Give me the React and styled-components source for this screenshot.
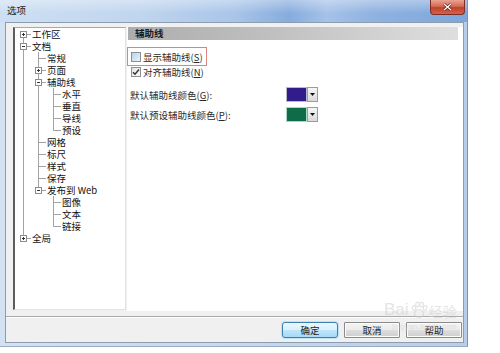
import React from 'react';
import styled, { createGlobalStyle } from 'styled-components';

const GlobalStyle = createGlobalStyle`
  html, body { margin: 0; padding: 0; background: #fff; }
  body { font-family: "Noto Sans CJK SC", "Noto Sans", sans-serif; }
  * { box-sizing: border-box; }
`;

const Window = styled.div`
  position: relative;
  width: 468px;
  height: 347px;
  display: flex;
  flex-direction: column;
  background: linear-gradient(90deg, #d3e2f3 0%, #c6d9ef 50%, #b7cdea 100%);
  border-right: 1px solid #8093ab;
  border-bottom: 1px solid #9aabbf;
`;

const TitleBar = styled.div`
  height: 22px;
  flex: none;
  display: flex;
  align-items: center;
  padding: 0 0 2px 7px;
  font-size: 9.5px;
  line-height: 12px;
  color: #1b1b1b;
  background:
    linear-gradient(180deg, rgba(255,255,255,0.35) 0%, rgba(255,255,255,0) 60%),
    linear-gradient(90deg, #cddff2 0%, #c0d5ee 30%, #a9c5e9 50%, #87acdd 62%, #a5c2e8 70%, #8fb2e0 80%, #7ea6db 100%);
`;

const CloseButton = styled.div`
  position: absolute;
  top: 0;
  right: 2px;
  width: 35px;
  height: 15px;
  border: 1px solid #7d2d22;
  border-top: none;
  border-radius: 0 0 4px 4px;
  background: linear-gradient(180deg, #e9a493 0%, #d66a55 45%, #c2402a 55%, #d4624b 100%);
  display: flex;
  align-items: center;
  justify-content: center;
`;

const Client = styled.div`
  flex: 1;
  margin: 0 3px 3px 5px;
  border: 1px solid #8d9cae;
  background: #f0f0f0;
  display: flex;
  flex-direction: column;
`;

const Main = styled.div`
  display: flex;
  gap: 1px;
  padding: 4px 0 0 7px;
  height: 288px;
  flex: none;
`;

const TreePanel = styled.div`
  width: 113px;
  height: 283px;
  background: #fff;
  border-left: 2px solid #5c5c5c;
  border-top: 1px solid #a8a8a8;
  border-right: 1px solid #e2e2e2;
  border-bottom: 1px solid #e2e2e2;
  padding: 0 0 0 1px;
`;

const TreeRow = styled.div`
  display: flex;
  height: 12px;
  align-items: stretch;
  font-size: 9.5px;
  line-height: 12px;
  color: #111;
  white-space: nowrap;
`;

const lineColor = '#a3a3a3';

const IndentCell = styled.div`
  width: 15px;
  flex: none;
  background: ${p => (p.$line ? `linear-gradient(${lineColor}, ${lineColor}) 7px 0 / 1px 100% no-repeat` : 'none')};
`;

const GlyphCell = styled.div`
  width: 15px;
  flex: none;
  display: flex;
  align-items: center;
  padding-left: 4px;
  background:
    ${p => (p.$top ? `linear-gradient(${lineColor}, ${lineColor}) 7px 0 / 1px 6px no-repeat,` : '')}
    ${p => (p.$bottom ? `linear-gradient(${lineColor}, ${lineColor}) 7px 6px / 1px 6px no-repeat,` : '')}
    linear-gradient(${lineColor}, ${lineColor}) 7px 6px / 8px 1px no-repeat;
`;

const ExpandBox = styled.div`
  width: 7px;
  height: 7px;
  margin-top: 1px;
  border: 1px solid #8c8c8c;
  background: #fff;
  position: relative;
  display: flex;
  align-items: center;
  justify-content: center;
  &::before {
    content: '';
    width: 3px;
    height: 1px;
    background: #333;
  }
  &::after {
    content: '';
    display: ${p => (p.$open ? 'none' : 'block')};
    position: absolute;
    left: 2px;
    top: 1px;
    width: 1px;
    height: 3px;
    background: #333;
  }
`;

const TreeLabel = styled.div`
  margin-left: 1px;
  height: 12px;
  line-height: 12px;
  overflow: visible;
`;

const RightPanel = styled.div`
  flex: 1;
  height: 284px;
  background: #fff;
  display: flex;
  flex-direction: column;
`;

const Header = styled.div`
  height: 13px;
  margin: 0 5px 0 1px;
  padding-left: 7px;
  font-size: 9.5px;
  font-weight: bold;
  line-height: 13px;
  color: #1a1a1a;
  background: linear-gradient(90deg, #adadad 0%, #bebebe 40%, #d4d4d4 80%, #dedede 100%);
`;

const Highlight = styled.div`
  margin-top: 7px;
  width: 80px;
  height: 19px;
  border: 1px solid #d9857f;
  display: flex;
  align-items: center;
  padding-left: 3px;
`;

const CheckRow = styled.div`
  display: flex;
  align-items: center;
  height: 12px;
  padding-left: ${p => p.$pad || 0}px;
`;

const CheckBox = styled.div`
  width: 10px;
  height: 10px;
  flex: none;
  border: 1px solid #8f8f8f;
  background: ${p =>
    p.$checked
      ? 'linear-gradient(135deg, #e6e6e6, #f8f8f8)'
      : 'linear-gradient(135deg, #b9d3ec 0%, #d6e6f5 60%, #eef5fb 100%)'};
  display: flex;
  align-items: center;
  justify-content: center;
`;

const CheckText = styled.div`
  margin-left: 2px;
  font-size: 9.5px;
  color: #2a2a2a;
  white-space: nowrap;
  height: 12px;
  line-height: 12px;
`;

const Key = styled.span`
  text-decoration: underline;
`;

const ColorGrid = styled.div`
  margin-top: 9px;
  padding-left: 3px;
  display: grid;
  grid-template-columns: 156px auto;
  row-gap: 5px;
  align-items: center;
  justify-content: start;
`;

const ColorLabel = styled.div`
  font-size: 9.5px;
  color: #2a2a2a;
  white-space: nowrap;
  height: 12px;
  line-height: 12px;
`;

const ColorPicker = styled.div`
  display: flex;
  height: 15px;
`;

const Swatch = styled.div`
  width: 21px;
  height: 15px;
  border: 1px solid ${p => p.$edge};
  background: ${p => p.$color};
`;

const DropButton = styled.div`
  width: 11px;
  height: 15px;
  border: 1px solid #9c9c9c;
  background: linear-gradient(180deg, #f6f6f6, #d9d9d9);
  display: flex;
  align-items: center;
  justify-content: center;
`;

const Footer = styled.div`
  margin-top: 5px;
  flex: 1;
  border-top: 1px solid #a9a9a9;
  box-shadow: inset 0 1px 0 #fdfdfd;
  display: flex;
  justify-content: flex-end;
  align-items: center;
  gap: 6px;
  padding-right: 1px;
`;

const Button = styled.div`
  width: 56px;
  height: 16px;
  border: 1px solid ${p => (p.$default ? '#3c7fb1' : '#8a8a8a')};
  border-radius: ${p => (p.$default ? '3px' : '1px')};
  background: ${p =>
    p.$default
      ? 'linear-gradient(180deg, #eaf6fd 0%, #d9f0fc 50%, #bee6fd 51%, #a7d9f5 100%)'
      : 'linear-gradient(180deg, #f3f3f3 0%, #ebebeb 50%, #dddddd 51%, #cfcfcf 100%)'};
  box-shadow: ${p => (p.$default ? '0 0 0 1px #bfe3f7' : 'inset 0 0 0 1px #fcfcfc')};
  font-size: 9.5px;
  line-height: 12px;
  color: #1a1a1a;
  display: flex;
  align-items: center;
  justify-content: center;
`;

const Watermark = styled.div`
  position: absolute;
  left: 384px;
  top: 301px;
  display: flex;
  flex-direction: column;
  align-items: flex-start;
  opacity: 0.55;
  pointer-events: none;
`;

const MarkTop = styled.div`
  display: flex;
  align-items: flex-end;
  font-family: "Liberation Sans", sans-serif;
  font-size: 17px;
  line-height: 18px;
  color: #cfcfcf;
  gap: 1px;
`;

const MarkCn = styled.span`
  font-family: "Noto Sans CJK SC", sans-serif;
  font-size: 14px;
  line-height: 16px;
`;

const MarkSmall = styled.div`
  font-family: "Liberation Sans", sans-serif;
  font-size: 7px;
  line-height: 8px;
  color: #d0d0d0;
  margin: 4px 0 0 8px;
  letter-spacing: 0.5px;
`;

const tree = [
  { label: '工作区', level: 0, exp: 'plus' },
  { label: '文档', level: 0, exp: 'minus' },
  { label: '常规', level: 1 },
  { label: '页面', level: 1, exp: 'plus' },
  { label: '辅助线', level: 1, exp: 'minus' },
  { label: '水平', level: 2 },
  { label: '垂直', level: 2 },
  { label: '导线', level: 2 },
  { label: '预设', level: 2 },
  { label: '网格', level: 1 },
  { label: '标尺', level: 1 },
  { label: '样式', level: 1 },
  { label: '保存', level: 1 },
  { label: '发布到 Web', level: 1, exp: 'minus' },
  { label: '图像', level: 2 },
  { label: '文本', level: 2 },
  { label: '链接', level: 2 },
  { label: '全局', level: 0, exp: 'plus' },
];

const hasLaterSibling = (i, l) => {
  for (let j = i + 1; j < tree.length; j++) {
    if (tree[j].level < l) return false;
    if (tree[j].level === l) return true;
  }
  return false;
};

const Tree = () => (
  <TreePanel>
    {tree.map((n, i) => {
      const indents = [];
      for (let l = 0; l < n.level; l++) {
        indents.push(<IndentCell key={l} $line={hasLaterSibling(i, l)} />);
      }
      return (
        <TreeRow key={i}>
          {indents}
          <GlyphCell $top={i !== 0} $bottom={hasLaterSibling(i, n.level)}>
            {n.exp && <ExpandBox $open={n.exp === 'minus'} />}
          </GlyphCell>
          <TreeLabel>{n.label}</TreeLabel>
        </TreeRow>
      );
    })}
  </TreePanel>
);

const CheckMark = () => (
  <svg width="8" height="8" viewBox="0 0 8 8">
    <path d="M1 4.2 L3 6.3 L7 1.5" fill="none" stroke="#333" strokeWidth="1.4" />
  </svg>
);

const Arrow = () => (
  <svg width="5" height="3" viewBox="0 0 5 3">
    <path d="M0 0 H5 L2.5 3 Z" fill="#111" />
  </svg>
);

export default function App() {
  return (
    <>
      <GlobalStyle />
      <Window>
        <TitleBar>选项</TitleBar>
        <CloseButton>
          <svg width="9" height="8" viewBox="0 0 9 8">
            <path d="M1 1 L8 7 M8 1 L1 7" stroke="#5a1a12" strokeWidth="2.6" />
            <path d="M1 1 L8 7 M8 1 L1 7" stroke="#fff" strokeWidth="1.4" />
          </svg>
        </CloseButton>
        <Client>
          <Main>
            <Tree />
            <RightPanel>
              <Header>辅助线</Header>
              <Highlight>
                <CheckBox />
                <CheckText>显示辅助线(<Key>S</Key>)</CheckText>
              </Highlight>
              <CheckRow $pad={4}>
                <CheckBox $checked>
                  <CheckMark />
                </CheckBox>
                <CheckText>对齐辅助线(<Key>N</Key>)</CheckText>
              </CheckRow>
              <ColorGrid>
                <ColorLabel>默认辅助线颜色(<Key>G</Key>):</ColorLabel>
                <ColorPicker>
                  <Swatch $color="#311c8c" $edge="#b9b9c9" />
                  <DropButton><Arrow /></DropButton>
                </ColorPicker>
                <ColorLabel>默认预设辅助线颜色(<Key>P</Key>):</ColorLabel>
                <ColorPicker>
                  <Swatch $color="#0f6b48" $edge="#a9d9c3" />
                  <DropButton><Arrow /></DropButton>
                </ColorPicker>
              </ColorGrid>
            </RightPanel>
          </Main>
          <Footer>
            <Button $default>确定</Button>
            <Button>取消</Button>
            <Button>帮助</Button>
          </Footer>
        </Client>
        <Watermark>
          <MarkTop>
            <span>Bai</span>
            <svg width="18" height="18" viewBox="0 0 18 18">
              <ellipse cx="9" cy="12.5" rx="4.5" ry="3.8" fill="none" stroke="#cfcfcf" strokeWidth="1.5" />
              <ellipse cx="4" cy="7" rx="1.8" ry="2.3" fill="none" stroke="#cfcfcf" strokeWidth="1.3" />
              <ellipse cx="7.5" cy="3.5" rx="1.8" ry="2.3" fill="none" stroke="#cfcfcf" strokeWidth="1.3" />
              <ellipse cx="11.5" cy="3.5" rx="1.8" ry="2.3" fill="none" stroke="#cfcfcf" strokeWidth="1.3" />
              <ellipse cx="15" cy="7" rx="1.8" ry="2.3" fill="none" stroke="#cfcfcf" strokeWidth="1.3" />
            </svg>
            <MarkCn>经验</MarkCn>
          </MarkTop>
          <MarkSmall>jingyan.baidu.com</MarkSmall>
        </Watermark>
      </Window>
    </>
  );
}
